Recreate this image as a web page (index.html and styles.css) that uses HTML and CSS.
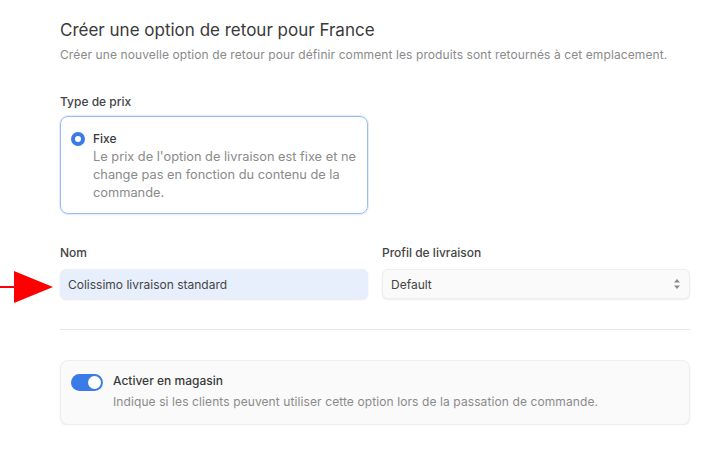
FILE: index.html
```html
<!DOCTYPE html>
<html lang="fr">
<head>
    <meta charset="UTF-8">
    <title>Créer une option de retour</title>
    <link rel="stylesheet" href="styles.css">
</head>
<body>
    <div class="arrow">
        <div class="arrow-line"></div>
        <div class="arrow-head"></div>
    </div>

    <div class="container">
        <h1>Créer une option de retour pour France</h1>
        <p class="subtitle">Créer une nouvelle option de retour pour définir comment les produits sont retournés à cet emplacement.</p>

        <div class="section">
            <div class="label">Type de prix</div>
            <div class="grid">
                <div class="radio-card">
                    <span class="radio"></span>
                    <div>
                        <div class="radio-title">Fixe</div>
                        <div class="radio-desc">Le prix de l'option de livraison est fixe et ne change pas en fonction du contenu de la commande.</div>
                    </div>
                </div>
            </div>
        </div>

        <div class="grid fields">
            <div class="field">
                <label for="nom">Nom</label>
                <input type="text" id="nom" class="input input-filled" value="Colissimo livraison standard">
            </div>
            <div class="field">
                <label for="profil">Profil de livraison</label>
                <div class="select">
                    <span>Default</span>
                    <svg width="8" height="12" viewBox="0 0 8 12">
                        <path d="M4 1 L7 4.5 H1 Z" fill="#8a8a8a"/>
                        <path d="M4 11 L7 7.5 H1 Z" fill="#8a8a8a"/>
                    </svg>
                </div>
            </div>
        </div>

        <hr class="divider">

        <div class="switch-card">
            <span class="switch"><span class="knob"></span></span>
            <div>
                <div class="switch-title">Activer en magasin</div>
                <div class="switch-desc">Indique si les clients peuvent utiliser cette option lors de la passation de commande.</div>
            </div>
        </div>
    </div>
</body>
</html>
```

FILE: styles.css
```css
body {
    font-family: Inter, "Noto Sans", sans-serif;
    margin: 0;
    background-color: #fff;
    color: #333;
}
.container {
    padding: 18px 24px 0 60px;
}
h1 {
    font-size: 17px;
    font-weight: 400;
    color: #3a3a3a;
    margin: 0;
    line-height: 24px;
}
.subtitle {
    font-size: 12px;
    letter-spacing: 0.1px;
    color: #8a8a8a;
    margin: 4px 0 0;
    line-height: 18px;
}
.section {
    margin-top: 30px;
}
.label, label {
    display: block;
    font-size: 12px;
    font-weight: 500;
    color: #444;
    line-height: 16px;
    margin-bottom: 8px;
}
.section .label {
    margin-bottom: 6px;
}
.grid {
    display: grid;
    grid-template-columns: 1fr 1fr;
    gap: 14px;
}
.radio-card {
    display: flex;
    gap: 8px;
    border: 1px solid #9dbcf3;
    border-radius: 8px;
    padding: 14px 10px 11px 10px;
    box-shadow: 0 0 0 1px #e3ecfc, 0 1px 2px rgba(0,0,0,0.06);
}
.radio {
    flex: none;
    width: 14px;
    height: 14px;
    margin-top: 1px;
    border-radius: 50%;
    background: #3b7be8;
    position: relative;
}
.radio::after {
    content: "";
    position: absolute;
    left: 4px;
    top: 4px;
    width: 6px;
    height: 6px;
    border-radius: 50%;
    background: #fff;
}
.radio-title {
    font-size: 12px;
    font-weight: 500;
    color: #3a3a3a;
    line-height: 16px;
}
.radio-desc {
    font-size: 12.8px;
    color: #8a8a8a;
    line-height: 18px;
    margin-top: 1px;
}
.fields {
    margin-top: 31px;
}
.input, .select {
    box-sizing: border-box;
    width: 100%;
    height: 30px;
    padding: 0 8px;
    border-radius: 6px;
    font-family: inherit;
    font-size: 12px;
    color: #444;
}
.input-filled {
    border: none;
    background: #e8effc;
    box-shadow: 0 1px 2px rgba(0,0,0,0.1);
    outline: none;
}
.select {
    display: flex;
    align-items: center;
    justify-content: space-between;
    background: #fafafa;
    border: 1px solid #eee;
    box-shadow: 0 1px 2px rgba(0,0,0,0.08);
}
.divider {
    border: none;
    border-top: 1px solid #e8e8e8;
    margin: 30px 0 30px;
}
.switch-card {
    display: flex;
    gap: 10px;
    background: #fafafa;
    border: 1px solid #eee;
    border-radius: 8px;
    padding: 12px 10px 13px;
    box-shadow: 0 1px 2px rgba(0,0,0,0.08);
}
.switch {
    flex: none;
    width: 32px;
    height: 17px;
    border-radius: 9px;
    background: #3b7be8;
    position: relative;
    margin-top: 1px;
}
.knob {
    position: absolute;
    right: 2px;
    top: 2px;
    width: 13px;
    height: 13px;
    border-radius: 50%;
    background: #fff;
}
.switch-title {
    font-size: 12px;
    font-weight: 500;
    color: #3a3a3a;
    line-height: 16px;
}
.switch-desc {
    font-size: 12px;
    letter-spacing: 0.1px;
    color: #8a8a8a;
    line-height: 18px;
    margin-top: 4px;
}
.arrow {
    position: absolute;
    left: 0;
    top: 271px;
    display: flex;
    align-items: center;
}
.arrow-line {
    width: 14px;
    height: 2px;
    background: #f00;
}
.arrow-head {
    width: 0;
    height: 0;
    border-top: 16px solid transparent;
    border-bottom: 16px solid transparent;
    border-left: 39px solid #f00;
}
```
